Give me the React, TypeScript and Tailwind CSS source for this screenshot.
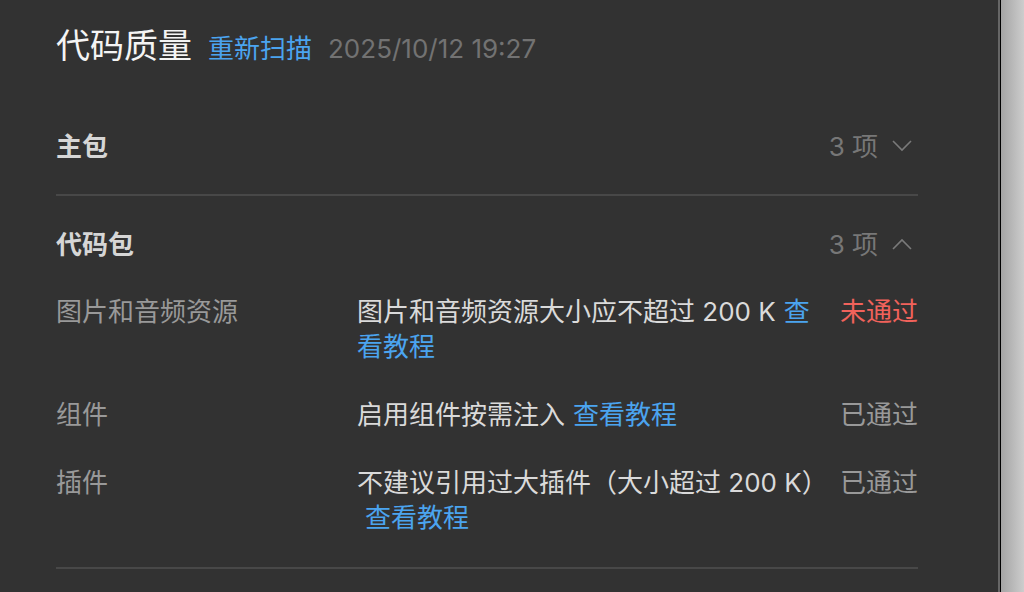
import React from "react";

const font = { fontFamily: 'Inter, "Noto Sans CJK SC", sans-serif' };

type Row = {
  label: string;
  desc: string;
  passed: boolean;
};

const rows: Row[] = [
  { label: "图片和音频资源", desc: "图片和音频资源大小应不超过 200 K", passed: false },
  { label: "组件", desc: "启用组件按需注入", passed: true },
  { label: "插件", desc: "不建议引用过大插件（大小超过 200 K）", passed: true },
];

function Chevron({ up }: { up?: boolean }) {
  return (
    <svg width="20" height="12" viewBox="0 0 20 12" className="mr-[6px] text-[#7a7a7a]">
      <polyline
        points={up ? "1,11 10,2 19,11" : "1,1 10,10 19,1"}
        fill="none"
        stroke="currentColor"
        strokeWidth="1.6"
      />
    </svg>
  );
}

function SectionHeader({ title, open }: { title: string; open?: boolean }) {
  return (
    <div className="flex h-[96px] items-center justify-between">
      <span className="text-[26px] font-bold text-[#d6d6d6]">{title}</span>
      <div className="flex items-center gap-[14px] text-[26px] text-[#777]">
        <span>3 项</span>
        <Chevron up={open} />
      </div>
    </div>
  );
}

export default function App() {
  return (
    <div className="flex h-screen w-full overflow-hidden" style={font}>
      <div className="w-[998px] shrink-0 bg-[#323232] pl-[56px] pr-[80px]">
        {/* title */}
        <div className="flex h-[98px] items-baseline gap-[16px] pt-[24px]">
          <h1 className="text-[34px] leading-[44px] text-[#f4f4f4]">代码质量</h1>
          <button className="text-[26px] text-[#4ba4ef]">重新扫描</button>
          <span className="text-[26px] text-[#727272]">2025/10/12 19:27</span>
        </div>

        <SectionHeader title="主包" />
        <div className="h-[2px] bg-[#484848]" />

        <SectionHeader title="代码包" open />
        <div className="flex flex-col gap-[33px] pb-[32px] pt-[2px] text-[26px] leading-[35px]">
          {rows.map((r) => (
            <div key={r.label} className="grid grid-cols-[301px_463px_1fr]">
              <span className="text-[#999]">{r.label}</span>
              <p className="text-[#dadada]">
                {r.desc}
                <a className="ml-2 cursor-pointer text-[#4ba4ef]">查看教程</a>
              </p>
              <span
                className={
                  "text-right " + (r.passed ? "text-[#999]" : "text-[#f1625b]")
                }
              >
                {r.passed ? "已通过" : "未通过"}
              </span>
            </div>
          ))}
        </div>
        <div className="h-[2px] bg-[#484848]" />
      </div>
      <div className="w-[2px] bg-[#666]" />
      <div className="w-px bg-black" />
      <div className="flex-1 bg-gradient-to-r from-[#a4a4a4] to-[#cdcdcd]" />
    </div>
  );
}
